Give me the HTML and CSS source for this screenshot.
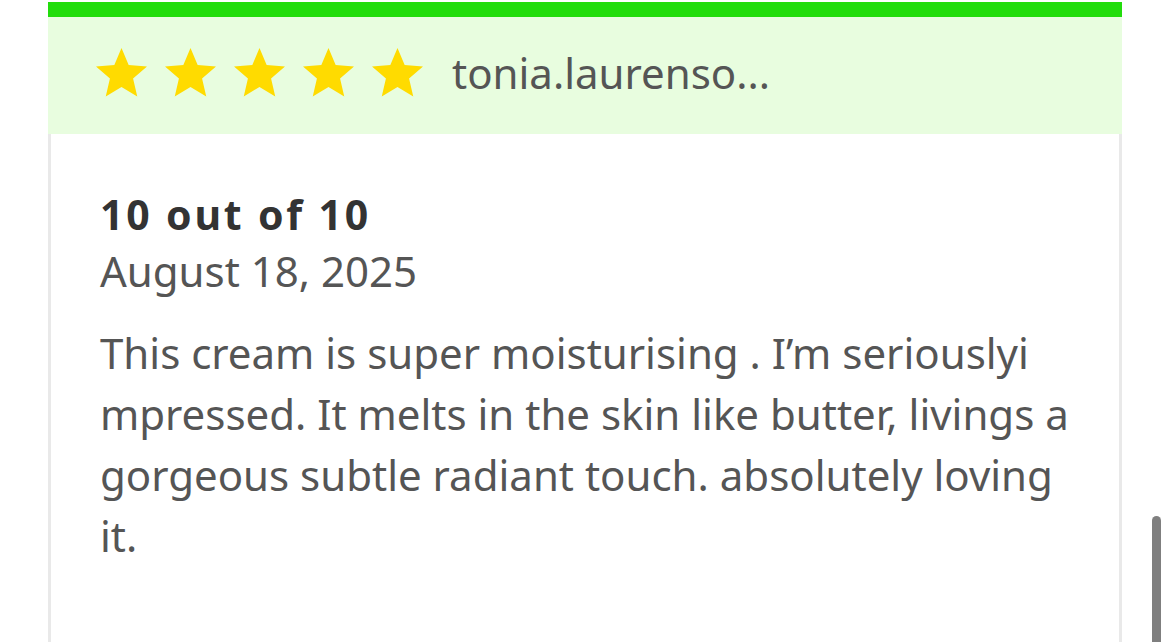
FILE: index.html
```html
<!DOCTYPE html>
<html lang="en">
<head>
<meta charset="utf-8">
<title>Review</title>
<link rel="stylesheet" href="styles.css">
</head>
<body>
<div class="card">
  <div class="card-top"></div>
  <div class="card-head">
    <div class="stars">
      <svg class="star" viewBox="2 2 20 19"><path d="M12 17.27L18.18 21l-1.64-7.03L22 9.24l-7.19-.61L12 2 9.19 8.63 2 9.24l5.46 4.73L5.82 21z"/></svg>
      <svg class="star" viewBox="2 2 20 19"><path d="M12 17.27L18.18 21l-1.64-7.03L22 9.24l-7.19-.61L12 2 9.19 8.63 2 9.24l5.46 4.73L5.82 21z"/></svg>
      <svg class="star" viewBox="2 2 20 19"><path d="M12 17.27L18.18 21l-1.64-7.03L22 9.24l-7.19-.61L12 2 9.19 8.63 2 9.24l5.46 4.73L5.82 21z"/></svg>
      <svg class="star" viewBox="2 2 20 19"><path d="M12 17.27L18.18 21l-1.64-7.03L22 9.24l-7.19-.61L12 2 9.19 8.63 2 9.24l5.46 4.73L5.82 21z"/></svg>
      <svg class="star" viewBox="2 2 20 19"><path d="M12 17.27L18.18 21l-1.64-7.03L22 9.24l-7.19-.61L12 2 9.19 8.63 2 9.24l5.46 4.73L5.82 21z"/></svg>
    </div>
    <span class="user">tonia.laurenso...</span>
  </div>
  <div class="card-body">
    <h2 class="title">10 out of 10</h2>
    <div class="date">August 18, 2025</div>
    <p class="text">This cream is super moisturising . I’m seriouslyi mpressed. It melts in the skin like butter, livings a gorgeous subtle radiant touch. absolutely loving it.</p>
  </div>
</div>
<div class="scrollbar"></div>
</body>
</html>
```

FILE: styles.css
```css
html, body {
  margin: 0;
  padding: 0;
  background: #ffffff;
  height: 100%;
  overflow: hidden;
}
body {
  font-family: "Noto Sans", "Open Sans", sans-serif;
  color: #555555;
}
.card {
  margin: 2px 0 0 48px;
  width: 1074px;
  display: flex;
  flex-direction: column;
  height: 700px;
}
.card-top {
  height: 15px;
  background: #22dd0c;
}
.card-head {
  height: 117px;
  background: #e8fddf;
  display: flex;
  align-items: center;
  padding-left: 48px;
}
.stars {
  display: flex;
  gap: 18px;
  margin-top: -6px;
}
.star {
  width: 51px;
  height: 48.5px;
  fill: #ffdb00;
  display: block;
}
.user {
  margin-left: 29px;
  margin-top: -6px;
  font-size: 42px;
  color: #555555;
  line-height: 1;
}
.card-body {
  flex: 1;
  border-left: 3px solid #e9e9e9;
  border-right: 3px solid #e9e9e9;
  padding: 52px 40px 0 49px;
}
.title {
  margin: 0;
  font-size: 41px;
  font-weight: 700;
  color: #333333;
  line-height: 56px;
  letter-spacing: 2.8px;
}
.date {
  font-size: 42px;
  line-height: 58px;
  color: #555555;
}
.text {
  margin: 22px 0 0;
  font-size: 42px;
  line-height: 61px;
  color: #555555;
}
.scrollbar {
  position: fixed;
  left: 1152px;
  top: 516px;
  width: 9px;
  height: 140px;
  background: #7f7f7f;
  border-radius: 5px;
}
```
